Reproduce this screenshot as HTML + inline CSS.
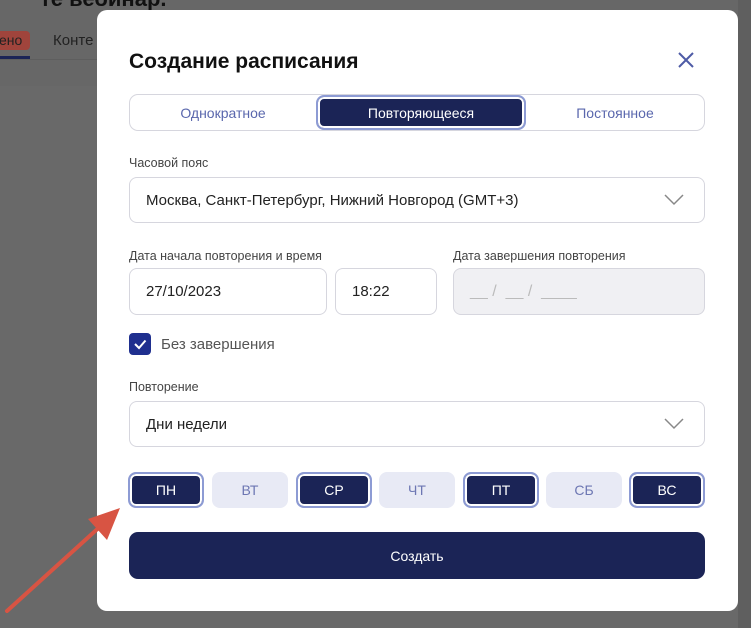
<!DOCTYPE html>
<html><head><meta charset="utf-8"><style>
*{box-sizing:border-box;margin:0;padding:0}
body{width:751px;height:628px;overflow:hidden;background:#676767;font-family:"Liberation Sans","DejaVu Sans",sans-serif;position:relative}
.a{position:absolute}
.modal{left:97px;top:10px;width:641px;height:601px;background:#fff;border-radius:10px}
.lbl{font-size:12.5px;color:#444;}
.inp{border:1px solid #d6d6de;border-radius:8px;background:#fff;font-size:15px;color:#222;display:flex;align-items:center;padding-left:16px}
.day{top:472px;width:76px;height:36px;border-radius:8px;font-size:14px;display:flex;align-items:center;justify-content:center}
.on{background:#1b2456;color:#fff;border:2px solid #8d9bd4;box-shadow:inset 0 0 0 2px #fff}
.off{background:#e8eaf5;color:#6d77b3}
.chev{position:absolute;right:20px;top:16px}
</style></head><body>
<div class="a" style="left:40px;top:-14px;font-size:22px;font-weight:bold;color:#111">те вебинар.</div>
<div class="a" style="left:-4px;top:31px;width:34px;height:19px;background:#a0443c;border-radius:4px;color:#222;font-size:14px;padding-left:3px;line-height:19px">ено</div>
<div class="a" style="left:53px;top:32px;font-size:15px;color:#222">Конте</div>
<div class="a" style="left:0;top:56px;width:30px;height:3px;background:#1b2456"></div>
<div class="a" style="left:0;top:59px;width:751px;height:1px;background:#5e5e5e"></div>
<div class="a" style="left:0;top:86px;width:751px;height:542px;background:#696969"></div>
<div class="a" style="left:738px;top:0;width:13px;height:628px;background:#5f5f5f"></div>

<div class="a modal"></div>
<div class="a" style="left:129px;top:50px;font-size:21px;font-weight:bold;color:#111">Создание расписания</div>
<svg class="a" style="left:677px;top:51px" width="18" height="18"><path d="M2 2L16 16M16 2L2 16" stroke="#4e5ba6" stroke-width="2"/></svg>

<div class="a" style="left:129px;top:94px;width:576px;height:37px;border:1px solid #d6d6de;border-radius:9px"></div>
<div class="a" style="left:129px;top:94px;width:188px;height:37px;display:flex;align-items:center;justify-content:center;font-size:14px;color:#5a67ad">Однократное</div>
<div class="a" style="left:316px;top:95px;width:210px;height:35px;background:#1b2456;border:2px solid #8d9bd4;box-shadow:inset 0 0 0 2px #fff;border-radius:8px;display:flex;align-items:center;justify-content:center;font-size:14px;color:#fff">Повторяющееся</div>
<div class="a" style="left:526px;top:94px;width:178px;height:37px;display:flex;align-items:center;justify-content:center;font-size:14px;color:#5a67ad">Постоянное</div>

<div class="a lbl" style="left:129px;top:156px">Часовой пояс</div>
<div class="a inp" style="left:129px;top:177px;width:576px;height:46px">Москва, Санкт-Петербург, Нижний Новгород (GMT+3)
<svg class="chev" width="20" height="12"><path d="M1 1L10 10L19 1" stroke="#888" stroke-width="1.5" fill="none"/></svg></div>

<div class="a lbl" style="left:129px;top:249px">Дата начала повторения и время</div>
<div class="a lbl" style="left:453px;top:249px">Дата завершения повторения</div>
<div class="a inp" style="left:129px;top:268px;width:198px;height:47px">27/10/2023</div>
<div class="a inp" style="left:335px;top:268px;width:102px;height:47px">18:22</div>
<div class="a inp" style="left:453px;top:268px;width:252px;height:47px;background:#f0f0f3;color:#bbb;font-size:16px">__ / &nbsp;__ / &nbsp;____</div>

<div class="a" style="left:129px;top:333px;width:22px;height:22px;background:#1f2f8f;border-radius:4px"></div>
<svg class="a" style="left:129px;top:333px" width="22" height="22"><path d="M6 11L10 15L16.5 7.5" stroke="#fff" stroke-width="2" fill="none"/></svg>
<div class="a" style="left:161px;top:336px;font-size:15px;color:#555">Без завершения</div>

<div class="a lbl" style="left:129px;top:380px">Повторение</div>
<div class="a inp" style="left:129px;top:401px;width:576px;height:46px">Дни недели
<svg class="chev" width="20" height="12"><path d="M1 1L10 10L19 1" stroke="#888" stroke-width="1.5" fill="none"/></svg></div>

<div class="a day on" style="left:128px">ПН</div>
<div class="a day off" style="left:212px">ВТ</div>
<div class="a day on" style="left:296px">СР</div>
<div class="a day off" style="left:379px">ЧТ</div>
<div class="a day on" style="left:463px">ПТ</div>
<div class="a day off" style="left:546px">СБ</div>
<div class="a day on" style="left:629px">ВС</div>

<div class="a" style="left:129px;top:532px;width:576px;height:47px;background:#1b2456;border-radius:9px;display:flex;align-items:center;justify-content:center;color:#fff;font-size:14px">Создать</div>

<svg class="a" style="left:0;top:490px" width="140" height="138"><path d="M7 121L104 33" stroke="#d85443" stroke-width="4" stroke-linecap="round"/><path d="M120 18L88 29L107 50Z" fill="#d85443"/></svg>
</body></html>
